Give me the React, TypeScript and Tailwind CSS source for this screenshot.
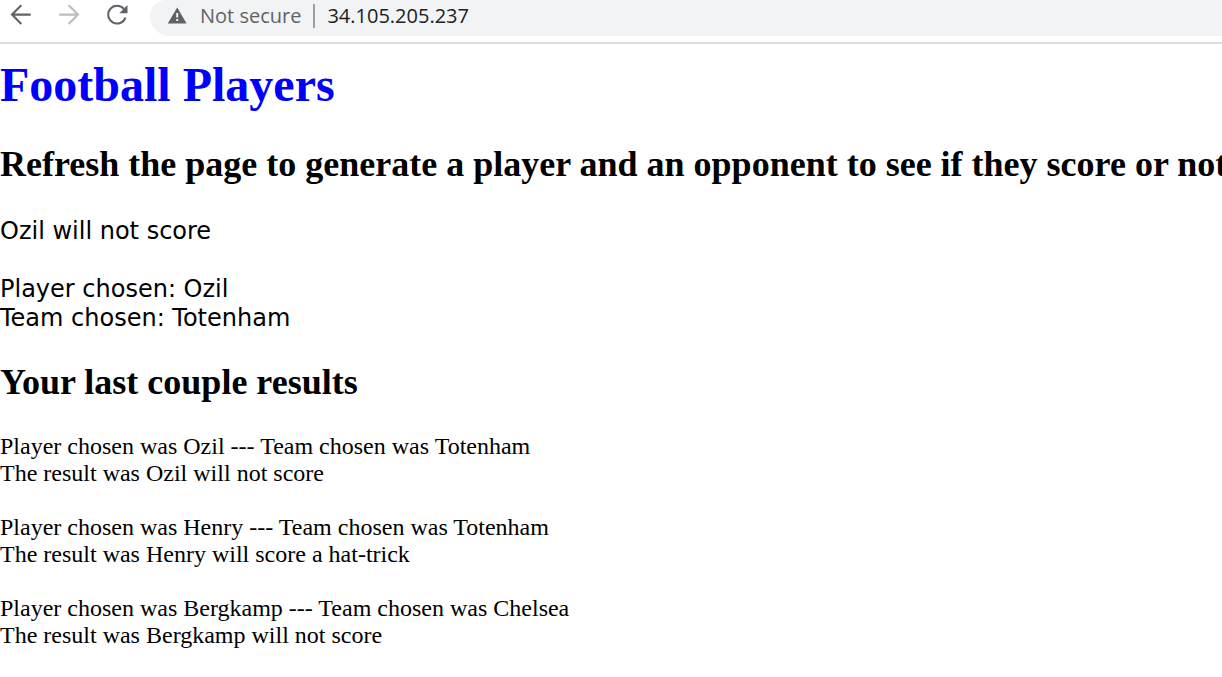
type Result = { player: string; team: string; outcome: string };

const results: Result[] = [
  { player: "Ozil", team: "Totenham", outcome: "Ozil will not score" },
  { player: "Henry", team: "Totenham", outcome: "Henry will score a hat-trick" },
  { player: "Bergkamp", team: "Chelsea", outcome: "Bergkamp will not score" },
];

function BrowserBar() {
  return (
    <header className="flex h-11 items-start border-b-2 border-[#dadce0] bg-white font-['Open_Sans','Noto_Sans',sans-serif] text-xl">
      <nav className="flex h-[30px] shrink-0 items-center gap-6 pl-2" aria-label="Browser controls">
        <button type="button" aria-label="Back" className="text-[#5f6368]">
          <svg className="block size-6" viewBox="0 0 24 24" fill="none" stroke="currentColor" strokeWidth="2.1">
            <path d="M22.7 11.6H4.5M13.3 2.3 4 11.6l9.3 9.3" />
          </svg>
        </button>
        <button type="button" aria-label="Forward" disabled className="text-[#babcbe]">
          <svg className="block size-6" viewBox="0 0 24 24" fill="none" stroke="currentColor" strokeWidth="2.1">
            <path d="M3.3 11.6h18.2M12.7 2.3l9.3 9.3-9.3 9.3" />
          </svg>
        </button>
        <button type="button" aria-label="Reload" className="text-[#5f6368]">
          <svg className="block size-6" viewBox="0 0 24 24" fill="none">
            <path d="M20 6A8.9 8.9 0 1 0 21.5 14.6" stroke="currentColor" strokeWidth="2" />
            <path d="M23.5 2v8.2h-8.2z" fill="currentColor" />
          </svg>
        </button>
      </nav>
      <div className="ml-[22px] flex h-9 min-w-0 flex-1 items-center rounded-bl-[20px] rounded-tl-[16px] bg-[#f1f3f4] pb-1 pl-4">
        <button type="button" className="flex shrink-0 items-center gap-3 text-[#5f6368]">
          <svg className="block size-[22px]" viewBox="0 0 22 22" aria-hidden="true">
            <path d="M11.2 2.4 20.6 18.6H1.8z" fill="currentColor" />
            <path d="M10.2 8h2v4.5h-2zM10.2 14h2v2h-2z" fill="#f1f3f4" />
          </svg>
          Not secure
        </button>
        <span className="ml-3 h-6 w-0.5 shrink-0 bg-[#9aa0a6]" />
        <input
          type="text"
          aria-label="Address"
          defaultValue="34.105.205.237"
          className="ml-3 min-w-0 flex-1 bg-transparent text-[#202124] outline-none"
        />
      </div>
    </header>
  );
}

export default function App() {
  return (
    <div className="min-h-screen overflow-x-hidden bg-white text-black">
      <BrowserBar />
      <main className="pt-[13px] font-['Liberation_Serif',serif] text-2xl leading-[27px]">
        <h1 className="text-5xl leading-[56px] font-bold text-[#0000ff]">Football Players</h1>
        <h2 className="mt-[30px] text-4xl leading-[42px] font-bold whitespace-nowrap">
          Refresh the page to generate a player and an opponent to see if they score or not
        </h2>
        <div className="mt-8 font-['DejaVu_Sans',sans-serif] leading-[29px]">
          <p>Ozil will not score</p>
          <p className="mt-[29px]">
            Player chosen: Ozil
            <br />
            Team chosen: Totenham
          </p>
        </div>
        <h2 className="mt-7 text-4xl leading-[42px] font-bold">Your last couple results</h2>
        <div className="mt-[30px] flex flex-col gap-[27px]">
          {results.map((r) => (
            <p key={r.player}>
              Player chosen was {r.player} --- Team chosen was {r.team}
              <br />
              The result was {r.outcome}
            </p>
          ))}
        </div>
      </main>
    </div>
  );
}
